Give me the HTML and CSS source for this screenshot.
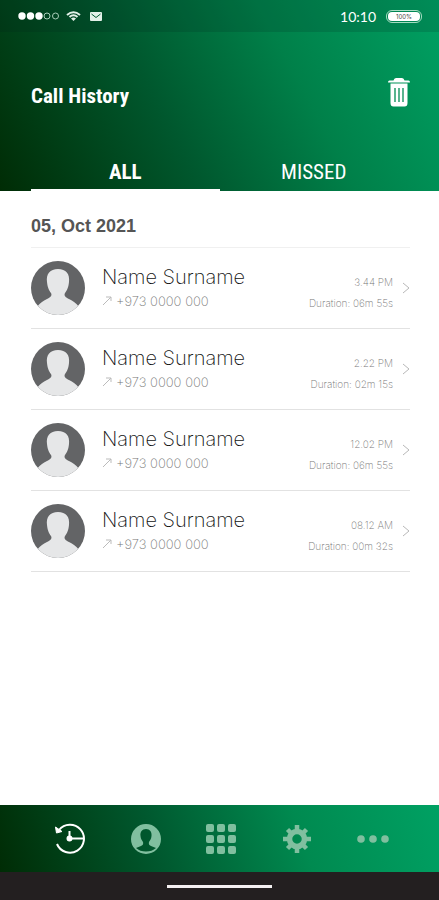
FILE: index.html
```html
<!DOCTYPE html>
<html lang="en">
<head>
    <meta charset="UTF-8">
    <meta name="viewport" content="width=device-width, initial-scale=1.0">
    <title>Call History</title>
    <link rel="stylesheet" href="styles.css">
</head>
<body>
<header class="header">
    <div class="status-bar">
        <svg class="signal" viewBox="0 0 42 10" width="42" height="10" fill="#fff">
            <circle cx="4" cy="5" r="3.700"/>
            <circle cx="12.500" cy="5" r="3.700"/>
            <circle cx="21" cy="5" r="3.700"/>
            <circle cx="29" cy="5" r="3" fill="none" stroke="#a9cdb9"/>
            <circle cx="37.500" cy="5" r="3" fill="none" stroke="#a9cdb9"/>
        </svg>
        <svg class="wifi" viewBox="0 0 15 10" width="15" height="10" fill="none" stroke="#e3f1e9" stroke-width="2">
            <path d="M1 4Q7.500-1.500 14 4M3.500 6Q7.500 2.500 11.500 6"/>
            <path d="M5 7.500Q7.500 5.500 10 7.500L7.500 10Z" fill="#e3f1e9" stroke="none"/>
        </svg>
        <svg class="mail" viewBox="0 0 12 9" width="12" height="9">
            <rect width="12" height="9" rx="1" fill="#e3f1e9"/>
            <path d="M1.500 2L6 5.500L10.500 2" fill="none" stroke="#00592f"/>
        </svg>
        <span class="clock">10:10</span>
        <span class="battery"><span class="battery-level">100%</span></span>
    </div>
    <div class="title-row">
        <h1 class="title">Call History</h1>
        <button class="delete" type="button" aria-label="Delete history">
            <svg viewBox="0 0 22 30" width="22" height="30">
                <path d="M5.500 3.500Q6 1 8 1H14Q16 1 16.500 3.500H20.500Q22 3.500 22 5.500H0Q0 3.500 1.500 3.500ZM2.500 6.500H19.500V26Q19.500 29.500 16.500 29.500H5.500Q2.500 29.500 2.500 26Z" fill="#fff"/>
                <path d="M7 11V25M11 11V25M15 11V25" stroke="#008c53" stroke-width="1.300"/>
            </svg>
        </button>
    </div>
    <nav class="tabs">
        <button class="tab active" type="button">ALL</button>
        <button class="tab" type="button">MISSED</button>
    </nav>
</header>

<main class="history">
    <h2 class="date">05, Oct 2021</h2>
    <ul class="calls">
        <li class="call">
            <svg class="avatar" viewBox="0 0 54 54"><use href="#person"/></svg>
            <div class="contact">
                <span class="name">Name Surname</span>
                <span class="number"><svg class="outgoing" viewBox="0 0 10 10"><use href="#arrow"/></svg>+973 0000 000</span>
            </div>
            <div class="details">
                <span>3.44 PM</span>
                <span>Duration: 06m 55s</span>
            </div>
            <svg class="chevron" viewBox="0 0 8 12"><use href="#chevron"/></svg>
        </li>
        <li class="call">
            <svg class="avatar" viewBox="0 0 54 54"><use href="#person"/></svg>
            <div class="contact">
                <span class="name">Name Surname</span>
                <span class="number"><svg class="outgoing" viewBox="0 0 10 10"><use href="#arrow"/></svg>+973 0000 000</span>
            </div>
            <div class="details">
                <span>2.22 PM</span>
                <span>Duration: 02m 15s</span>
            </div>
            <svg class="chevron" viewBox="0 0 8 12"><use href="#chevron"/></svg>
        </li>
        <li class="call">
            <svg class="avatar" viewBox="0 0 54 54"><use href="#person"/></svg>
            <div class="contact">
                <span class="name">Name Surname</span>
                <span class="number"><svg class="outgoing" viewBox="0 0 10 10"><use href="#arrow"/></svg>+973 0000 000</span>
            </div>
            <div class="details">
                <span>12.02 PM</span>
                <span>Duration: 06m 55s</span>
            </div>
            <svg class="chevron" viewBox="0 0 8 12"><use href="#chevron"/></svg>
        </li>
        <li class="call">
            <svg class="avatar" viewBox="0 0 54 54"><use href="#person"/></svg>
            <div class="contact">
                <span class="name">Name Surname</span>
                <span class="number"><svg class="outgoing" viewBox="0 0 10 10"><use href="#arrow"/></svg>+973 0000 000</span>
            </div>
            <div class="details">
                <span>08.12 AM</span>
                <span>Duration: 00m 32s</span>
            </div>
            <svg class="chevron" viewBox="0 0 8 12"><use href="#chevron"/></svg>
        </li>
    </ul>
</main>

<nav class="bottom-nav">
    <button class="nav-item active" type="button" aria-label="History">
        <svg viewBox="0 0 32 32" width="32" height="32" fill="none" stroke="currentColor" stroke-width="2">
            <path d="M5 7A14 14 0 1 1 3 21"/>
            <path d="M15.500 8V15.500H29"/>
            <circle cx="15.500" cy="15.500" r="2" fill="currentColor"/>
            <path d="M1.500 4L2.500 10L8 8.500Z" fill="currentColor" stroke-width="1"/>
        </svg>
    </button>
    <button class="nav-item" type="button" aria-label="Contacts">
        <svg viewBox="0 0 30 30" width="30" height="30" fill="currentColor">
            <path fill-rule="evenodd" d="M15 0A15 15 0 1 1 15 30A15 15 0 1 1 15 0ZM15 5C11 5 9 8 9.500 12C9.700 15 11 16.500 12 18C12.500 20 12 21 10 22L5 24Q9 27.500 15 27.500T25 24L20 22C18 21 17.500 20 18 18C19 16.500 20.300 15 20.500 12C21 8 19 5 15 5Z"/>
        </svg>
    </button>
    <button class="nav-item" type="button" aria-label="Keypad">
        <svg viewBox="0 0 30 30" width="30" height="30" fill="currentColor">
            <rect x="0" y="0" width="8" height="8" rx="2"/>
            <rect x="11" y="0" width="8" height="8" rx="2"/>
            <rect x="22" y="0" width="8" height="8" rx="2"/>
            <rect x="0" y="11" width="8" height="8" rx="2"/>
            <rect x="11" y="11" width="8" height="8" rx="2"/>
            <rect x="22" y="11" width="8" height="8" rx="2"/>
            <rect x="0" y="22" width="8" height="8" rx="2"/>
            <rect x="11" y="22" width="8" height="8" rx="2"/>
            <rect x="22" y="22" width="8" height="8" rx="2"/>
        </svg>
    </button>
    <button class="nav-item" type="button" aria-label="Settings">
        <svg viewBox="0 0 28 28" width="28" height="28" fill="none" stroke="currentColor">
            <circle cx="14" cy="14" r="7.500" stroke-width="5.500"/>
            <path d="M14 0V5M14 23V28M0 14H5M23 14H28M4.500 4.500L8 8M20 20L23.500 23.500M4.500 23.500L8 20M20 8L23.500 4.500" stroke-width="4.500"/>
        </svg>
    </button>
    <button class="nav-item" type="button" aria-label="More">
        <svg viewBox="0 0 32 8" width="32" height="8" fill="currentColor">
            <circle cx="4" cy="4" r="3.800"/>
            <circle cx="16" cy="4" r="3.800"/>
            <circle cx="28" cy="4" r="3.800"/>
        </svg>
    </button>
</nav>
<div class="home-bar"><div class="home-line"></div></div>

<!-- shared shapes for the call rows -->
<svg class="shapes" width="0" height="0">
    <defs>
        <clipPath id="round"><circle cx="27" cy="27" r="27"/></clipPath>
        <g id="person" clip-path="url(#round)">
            <rect width="54" height="54" fill="#636466"/>
            <path d="M27 8C19 8 15 13 16 21C16.500 27 18.500 30 20 32C21.500 35 19 36.500 16 38C12 40 9 42 6 46V54H48V46C45 42 42 40 38 38C35 36.500 32.500 35 34 32C35.500 30 37.500 27 38 21C39 13 35 8 27 8Z" fill="#e6e7e8"/>
        </g>
        <path id="arrow" d="M1 9L9 1M4 1H9V5" fill="none" stroke="#bbb"/>
        <path id="chevron" d="M1 1L7 6L1 11" fill="none" stroke="#b8b8b8"/>
    </defs>
</svg>
</body>
</html>
```
FILE: styles.css
```css
* {
    box-sizing: border-box;
}
body {
    margin: 0;
    min-height: 100vh;
    display: flex;
    flex-direction: column;
    background-color: #fff;
    font-family: "Inter", "Liberation Sans", sans-serif;
}
button {
    padding: 0;
    border: none;
    background: none;
    color: inherit;
    cursor: pointer;
}
svg {
    display: block;
}
.header {
    color: white;
    background: linear-gradient(62deg, #002c05 0%, #00582e 38%, #008049 66%, #00a163 100%);
}
.status-bar {
    display: flex;
    align-items: center;
    height: 32px;
    padding: 0 17px 0 18px;
    background-color: rgba(0, 30, 30, 0.15);
}
.wifi {
    margin-left: 6px;
}
.mail {
    margin-left: 9px;
}
.clock {
    margin-left: auto;
    font-family: "Lato", sans-serif;
    font-size: 14px;
}
.battery {
    width: 36px;
    height: 13px;
    margin-left: 10px;
    padding: 1px;
    border: 1px solid #a6dcc2;
    border-radius: 6px;
}
.battery-level {
    display: block;
    border-radius: 4px;
    background-color: white;
    color: #444;
    font-size: 6px;
    line-height: 9px;
    text-align: center;
}
.title-row {
    display: flex;
    align-items: flex-start;
    justify-content: space-between;
    height: 116px;
    padding: 40px 29px 0 31px;
}
.title {
    margin: 10px 0 0;
    font-family: "Liberation Sans Narrow", "Roboto Condensed", "Liberation Sans", sans-serif;
    font-size: 21px;
    line-height: 28px;
}
.delete {
    margin-top: 5px;
}
.tabs {
    display: grid;
    grid-template-columns: 1fr 1fr;
    padding: 0 31px;
}
.tab {
    height: 43px;
    padding-top: 6px;
    border-bottom: 2px solid transparent;
    font-family: "Liberation Sans Narrow", "Roboto Condensed", "Liberation Sans", sans-serif;
    font-size: 21px;
}
.tab.active {
    border-bottom-color: white;
    font-weight: bold;
}
.history {
    flex: 1;
    padding: 0 29px 0 31px;
}
.date {
    margin: 0;
    padding: 25px 0 11px;
    color: #555;
    font-family: "Liberation Sans", sans-serif;
    font-size: 18px;
    line-height: 20px;
}
.calls {
    margin: 0;
    padding: 0;
    list-style: none;
    border-top: 1px solid #f0f0f0;
}
.call {
    display: flex;
    align-items: center;
    border-bottom: 1px solid #e2e2e2;
    padding: 13px 0;
}
.avatar {
    width: 54px;
    height: 54px;
}
.contact {
    display: flex;
    flex-direction: column;
    margin-left: 17px;
}
.name {
    color: #111;
    font-size: 20px;
    font-weight: 200;
    line-height: 26px;
}
.number {
    display: flex;
    align-items: center;
    gap: 4px;
    color: #777;
    font-size: 13px;
    font-weight: 200;
    line-height: 22px;
}
.outgoing {
    width: 10px;
    height: 10px;
}
.details {
    display: flex;
    flex-direction: column;
    margin-left: auto;
    padding-top: 9px;
    color: #777;
    font-size: 10px;
    font-weight: 200;
    line-height: 21px;
    text-align: right;
}
.chevron {
    width: 8px;
    height: 12px;
    margin-left: 9px;
}
.bottom-nav {
    display: grid;
    grid-template-columns: repeat(5, 1fr);
    height: 67px;
    padding: 0 28px 0 32px;
    background: linear-gradient(72deg, #002c05 0%, #00592f 36%, #008a50 68%, #00a163 100%);
}
.nav-item {
    display: flex;
    align-items: center;
    justify-content: center;
    color: #80bf9f;
}
.nav-item.active {
    color: white;
}
.home-bar {
    display: flex;
    align-items: center;
    justify-content: center;
    height: 28px;
    background-color: #231f20;
}
.home-line {
    width: 24%;
    height: 3px;
    background-color: #f4f0f1;
}
.shapes {
    position: absolute;
}
```
